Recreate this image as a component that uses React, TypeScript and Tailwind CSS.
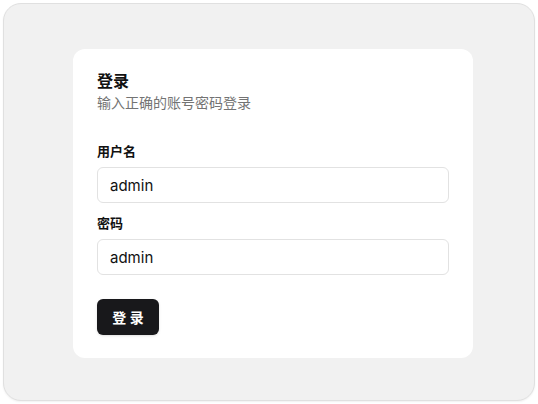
import React, { useState } from "react";

const App: React.FC = () => {
  const [username, setUsername] = useState("admin");
  const [password, setPassword] = useState("admin");

  return (
    <div
      className="w-[538px] h-[404px] bg-white p-[3px] flex"
      style={{ fontFamily: '"Inter", "Noto Sans CJK SC", sans-serif' }}
    >
      <div className="flex-1 rounded-[18px] border border-[#e0e0e0] bg-[#f1f1f1] pl-[69px] pt-[45px] shadow-[0_1px_2px_rgba(0,0,0,0.06)]">
        {/* Login card */}
        <div className="w-[400px] rounded-[12px] bg-white px-6 pt-5 pb-[23px]">
          <h1 className="text-[16px] leading-6 font-bold text-[#111]">登录</h1>
          <p className="text-[14px] leading-5 text-[#737373]">输入正确的账号密码登录</p>

          <div className="mt-7 flex flex-col">
            <label className="text-[13px] leading-5 font-bold text-[#111]">用户名</label>
            <input
              value={username}
              onChange={(e) => setUsername(e.target.value)}
              className="mt-[6px] h-9 w-full rounded-[6px] border border-[#e2e2e2] bg-white px-3 text-[15px] text-[#111] outline-none"
            />
            <label className="mt-[10px] text-[13px] leading-5 font-bold text-[#111]">密码</label>
            <input
              value={password}
              onChange={(e) => setPassword(e.target.value)}
              className="mt-[6px] h-9 w-full rounded-[6px] border border-[#e2e2e2] bg-white px-3 text-[15px] text-[#111] outline-none"
            />
          </div>

          <button className="mt-6 flex h-9 w-[62px] items-center justify-center rounded-[6px] bg-[#18181b] text-[14px] font-bold text-white shadow-sm">
            登 录
          </button>
        </div>
      </div>
    </div>
  );
};

export default App;
